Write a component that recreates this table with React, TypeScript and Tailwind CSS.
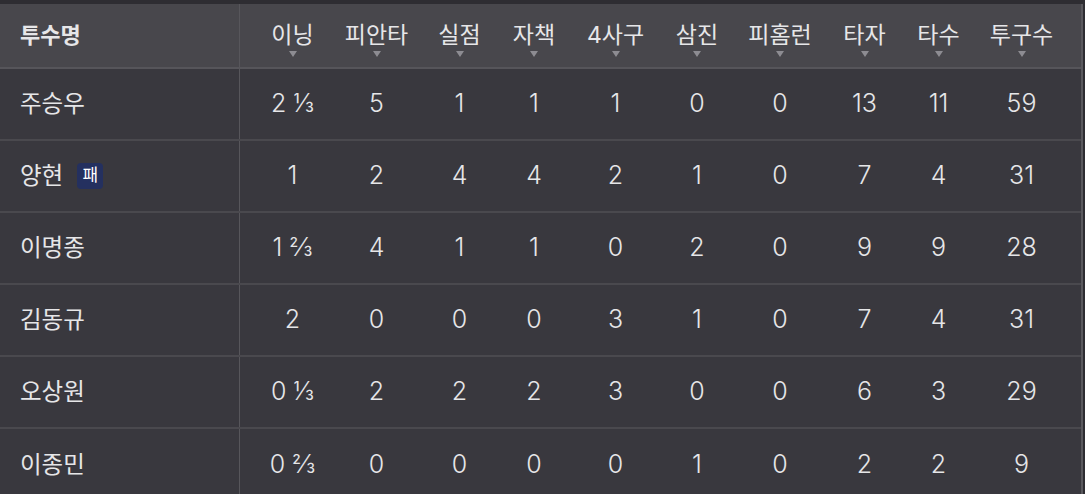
import { type ReactNode } from "react";

const columns = ["이닝", "피안타", "실점", "자책", "4사구", "삼진", "피홈런", "타자", "타수", "투구수"];

// small offsets so each column's centre sits where the screenshot has it
const columnPad = [
	"pl-[10px]",
	"",
	"pl-[4px]",
	"pr-[4px]",
	"",
	"",
	"",
	"pl-[6px]",
	"pr-[4px]",
	"pr-[20px]",
];

const rows: { name: string; badge?: string; stats: string[] }[] = [
	{ name: "주승우", stats: ["2 ⅓", "5", "1", "1", "1", "0", "0", "13", "11", "59"] },
	{ name: "양현", badge: "패", stats: ["1", "2", "4", "4", "2", "1", "0", "7", "4", "31"] },
	{ name: "이명종", stats: ["1 ⅔", "4", "1", "1", "0", "2", "0", "9", "9", "28"] },
	{ name: "김동규", stats: ["2", "0", "0", "0", "3", "1", "0", "7", "4", "31"] },
	{ name: "오상원", stats: ["0 ⅓", "2", "2", "2", "3", "0", "0", "6", "3", "29"] },
	{ name: "이종민", stats: ["0 ⅔", "0", "0", "0", "0", "1", "0", "2", "2", "9"] },
];

const grid =
	"grid grid-cols-[239px_1px_95px_83px_79px_78px_81px_82px_84px_79px_79px_103px]";

function Divider() {
	return <div className="bg-[#57565b]" />;
}

function Row({ children, className }: { children: ReactNode; className: string }) {
	return <div className={`${grid} ${className}`}>{children}</div>;
}

export default function App() {
	return (
		<div
			className="w-[1085px] h-[494px] overflow-hidden bg-[#2e2d32] pt-[4px] text-[#e6e6e8]"
			style={{ fontFamily: '"Inter", "Noto Sans CJK KR", sans-serif' }}
		>
			<div className="w-[1083px] border-r-2 border-[#5a595e] bg-[#39383e]">
				<Row className="h-[65px] bg-[#48474c] border-b-2 border-[#56555a]">
					<div className="flex items-center pl-[20px] text-[22px] font-bold">투수명</div>
					<Divider />
					{columns.map((label, i) => (
						<div
							key={label}
							className={`flex flex-col items-center justify-center ${columnPad[i]}`}
						>
							<span className="text-[23px] leading-[28px] mt-[6px]">{label}</span>
							<span className="mt-[2px] w-0 h-0 border-l-[4px] border-r-[4px] border-t-[6px] border-l-transparent border-r-transparent border-t-[#8d8c92]" />
						</div>
					))}
				</Row>
				{rows.map((row, r) => (
					<Row
						key={row.name}
						className={`h-[72px] ${r < rows.length - 1 ? "border-b-2 border-[#4a494e]" : ""}`}
					>
						<div className="flex items-center pl-[20px] text-[23.5px]">
							<span>{row.name}</span>
							{row.badge && (
								<span className="ml-[14px] flex h-[26px] w-[26px] items-center justify-center rounded-[4px] bg-[#24305f] text-[17px] text-white">
									{row.badge}
								</span>
							)}
						</div>
						<Divider />
						{row.stats.map((value, i) => (
							<div
								key={columns[i]}
								className={`flex items-center justify-center text-[25px] font-light ${columnPad[i]}`}
							>
								{value}
							</div>
						))}
					</Row>
				))}
			</div>
		</div>
	);
}
